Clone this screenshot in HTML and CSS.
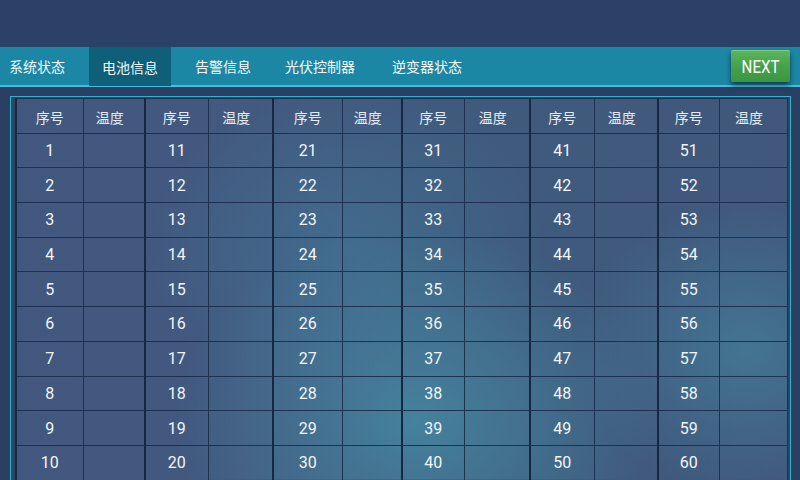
FILE: index.html
```html
<!DOCTYPE html>
<html lang="zh-CN">
<head>
    <meta charset="UTF-8">
    <title>电池信息</title>
    <link rel="stylesheet" href="styles.css">
</head>
<body>
<div class="topbar"></div>

<div class="tabbar">
    <div class="tab">系统状态</div>
    <div class="tab active">电池信息</div>
    <div class="tab">告警信息</div>
    <div class="tab">光伏控制器</div>
    <div class="tab">逆变器状态</div>
    <button class="next-btn"><span>NEXT</span></button>
</div>

<div class="panel">
    <table class="grid">
        <colgroup>
            <col class="w67"><col class="w62">
            <col class="w63"><col class="w65">
            <col class="w69"><col class="w60">
            <col class="w62"><col class="w66">
            <col class="w64"><col class="w64">
            <col class="w61"><col class="w68">
        </colgroup>
        <tr class="head">
            <th>序号</th><th>温度</th><th>序号</th><th>温度</th><th>序号</th><th>温度</th>
            <th>序号</th><th>温度</th><th>序号</th><th>温度</th><th>序号</th><th>温度</th>
        </tr>
        <tr><td>1</td><td></td><td>11</td><td></td><td>21</td><td></td><td>31</td><td></td><td>41</td><td></td><td>51</td><td></td></tr>
        <tr><td>2</td><td></td><td>12</td><td></td><td>22</td><td></td><td>32</td><td></td><td>42</td><td></td><td>52</td><td></td></tr>
        <tr><td>3</td><td></td><td>13</td><td></td><td>23</td><td></td><td>33</td><td></td><td>43</td><td></td><td>53</td><td></td></tr>
        <tr><td>4</td><td></td><td>14</td><td></td><td>24</td><td></td><td>34</td><td></td><td>44</td><td></td><td>54</td><td></td></tr>
        <tr><td>5</td><td></td><td>15</td><td></td><td>25</td><td></td><td>35</td><td></td><td>45</td><td></td><td>55</td><td></td></tr>
        <tr><td>6</td><td></td><td>16</td><td></td><td>26</td><td></td><td>36</td><td></td><td>46</td><td></td><td>56</td><td></td></tr>
        <tr><td>7</td><td></td><td>17</td><td></td><td>27</td><td></td><td>37</td><td></td><td>47</td><td></td><td>57</td><td></td></tr>
        <tr><td>8</td><td></td><td>18</td><td></td><td>28</td><td></td><td>38</td><td></td><td>48</td><td></td><td>58</td><td></td></tr>
        <tr><td>9</td><td></td><td>19</td><td></td><td>29</td><td></td><td>39</td><td></td><td>49</td><td></td><td>59</td><td></td></tr>
        <tr><td>10</td><td></td><td>20</td><td></td><td>30</td><td></td><td>40</td><td></td><td>50</td><td></td><td>60</td><td></td></tr>
    </table>
</div>
</body>
</html>
```

FILE: styles.css
```css
* {
    margin: 0;
    padding: 0;
    box-sizing: border-box;
}

body {
    width: 800px;
    height: 480px;
    overflow: hidden;
    background: #2a3f63;
    font-family: Roboto, "Noto Sans CJK SC", sans-serif;
    color: #eef3f8;
}

.topbar {
    height: 47px;
    background: #2b4165;
}

/* 탭 바 */
.tabbar {
    display: flex;
    align-items: stretch;
    gap: 11px;
    height: 40px;
    background: #1c87a4;
    border-bottom: 2px solid #43bde0;
}

.tab {
    display: flex;
    align-items: center;
    padding: 0 13px;
    font-size: 14px;
    color: #f2f7fa;
}

.tab:first-child {
    padding-left: 9px;
}

.tab.active {
    background: #0f5f79;
    margin-bottom: -1px;
}

.tab:nth-child(4) {
    margin-left: -3px;
}

.next-btn {
    margin: 3px 10px 3px auto;
    width: 59px;
    border: none;
    border-radius: 2px;
    background: linear-gradient(#5bb65e, #45a04a 55%, #3c9542);
    box-shadow: 0 3px 5px rgba(10, 25, 45, 0.7), inset 0 1px 0 rgba(255, 255, 255, 0.25);
    color: #fff;
    font-family: Roboto, sans-serif;
    font-size: 18px;
    padding-top: 1px;
}

.next-btn span {
    display: inline-block;
    transform: scaleX(0.84);
}

/* 표 패널 */
.panel {
    margin: 9px 9px 0 10px;
    border: 1px solid #2fb3c9;
    border-bottom: none;
    padding: 1px 3px 0 4px;
    background: #2c4669;
}

.grid {
    table-layout: fixed;
    width: 771px;
    border-collapse: collapse;
    background:
        radial-gradient(ellipse 240px 190px at 400px 320px, rgba(70, 140, 165, 0.8), rgba(70, 140, 165, 0) 100%),
        radial-gradient(ellipse 170px 150px at 730px 250px, rgba(70, 140, 165, 0.55), rgba(70, 140, 165, 0) 100%),
        radial-gradient(ellipse 200px 160px at 330px 150px, rgba(65, 125, 155, 0.5), rgba(65, 125, 155, 0) 100%),
        linear-gradient(90deg, #41577d, #43597f 30%, #3f5a7c 70%, #41577c);
}

.w60 { width: 60px; }
.w61 { width: 61px; }
.w62 { width: 62px; }
.w63 { width: 63px; }
.w64 { width: 64px; }
.w65 { width: 65px; }
.w66 { width: 66px; }
.w67 { width: 67px; }
.w68 { width: 68px; }
.w69 { width: 69px; }

.grid th,
.grid td {
    height: 34.7px;
    border: 1px solid #1e3153;
    text-align: center;
    vertical-align: middle;
    font-weight: normal;
}

.grid th {
    font-size: 14px;
    padding-top: 2px;
    color: #e4ecf3;
}

.grid th:nth-child(even) {
    padding-right: 8px;
}

.grid td {
    font-size: 16px;
    color: #f0f5fa;
}

/* 그룹 구분선 */
.grid th:nth-child(odd),
.grid td:nth-child(odd) {
    border-left: 2px solid #182844;
}
```
